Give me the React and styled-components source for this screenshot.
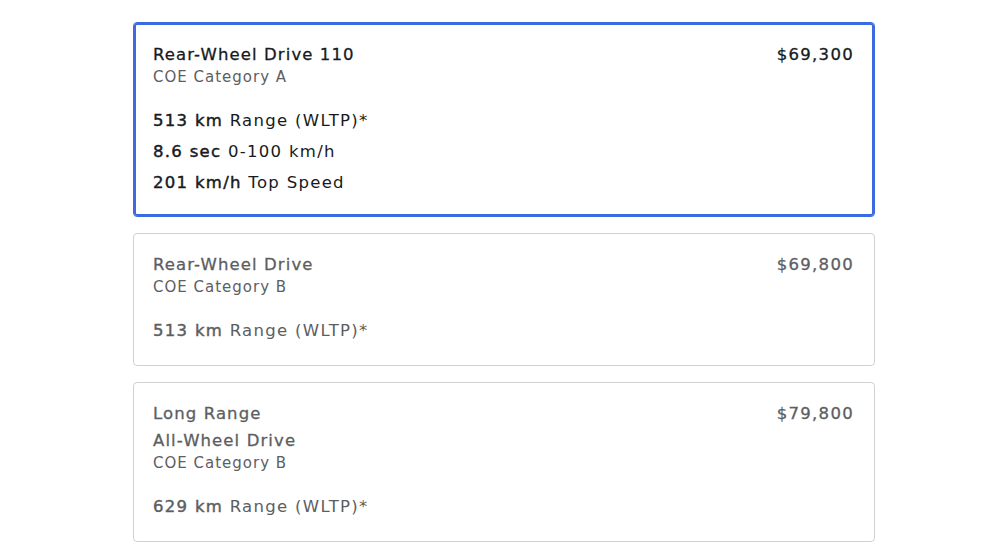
import React from "react";
import styled, { createGlobalStyle } from "styled-components";

const GlobalStyle = createGlobalStyle`
  * { box-sizing: border-box; }
  body {
    margin: 0;
    background: #ffffff;
    font-family: "DejaVu Sans", Inter, sans-serif;
    -webkit-font-smoothing: antialiased;
  }
`;

const Page = styled.div`
  padding: 22px 0 0 133px;
`;

const List = styled.div`
  width: 742px;
  display: flex;
  flex-direction: column;
  gap: 16px;
`;

const Card = styled.div`
  border: 1px solid ${(p) => (p.$selected ? "#3e6ae1" : "#d0d1d2")};
  box-shadow: ${(p) => (p.$selected ? "inset 0 0 0 2px #3e6ae1" : "none")};
  border-radius: 4px;
  padding: ${(p) => (p.$selected ? "18px 20px 18px 19px" : "17px 20px 19px 19px")};
  color: ${(p) => (p.$selected ? "#171a20" : "#5c5e62")};
`;

const Head = styled.div`
  display: flex;
  justify-content: space-between;
  align-items: flex-start;
`;

const Names = styled.div`
  display: flex;
  flex-direction: column;
`;

const Name = styled.div`
  font-size: 16.5px;
  line-height: 27px;
  letter-spacing: 1.1px;
  -webkit-text-stroke: 0.3px currentColor;
`;

const Category = styled.div`
  font-size: 15px;
  line-height: 19px;
  letter-spacing: 1px;
  color: #5c5e62;
`;

const Price = styled.div`
  font-size: 16.5px;
  line-height: 27px;
  letter-spacing: 1.3px;
  -webkit-text-stroke: 0.3px currentColor;
`;

const Specs = styled.div`
  margin-top: 18px;
  display: flex;
  flex-direction: column;
`;

const Spec = styled.div`
  font-size: 16.5px;
  line-height: 31px;
  letter-spacing: 1.3px;

  b {
    font-weight: normal;
    -webkit-text-stroke: 0.45px currentColor;
  }
`;

const trims = [
  {
    name: ["Rear-Wheel Drive 110"],
    category: "COE Category A",
    price: "$69,300",
    selected: true,
    specs: [
      ["513 km", "Range (WLTP)*"],
      ["8.6 sec", "0-100 km/h"],
      ["201 km/h", "Top Speed"],
    ],
  },
  {
    name: ["Rear-Wheel Drive"],
    category: "COE Category B",
    price: "$69,800",
    specs: [["513 km", "Range (WLTP)*"]],
  },
  {
    name: ["Long Range", "All-Wheel Drive"],
    category: "COE Category B",
    price: "$79,800",
    specs: [["629 km", "Range (WLTP)*"]],
  },
];

export default function App() {
  return (
    <>
      <GlobalStyle />
      <Page>
        <List>
          {trims.map((t) => (
            <Card key={t.price} $selected={t.selected}>
              <Head>
                <Names>
                  {t.name.map((n) => (
                    <Name key={n}>{n}</Name>
                  ))}
                  <Category>{t.category}</Category>
                </Names>
                <Price>{t.price}</Price>
              </Head>
              <Specs>
                {t.specs.map(([v, l]) => (
                  <Spec key={l}>
                    <b>{v}</b> {l}
                  </Spec>
                ))}
              </Specs>
            </Card>
          ))}
        </List>
      </Page>
    </>
  );
}
